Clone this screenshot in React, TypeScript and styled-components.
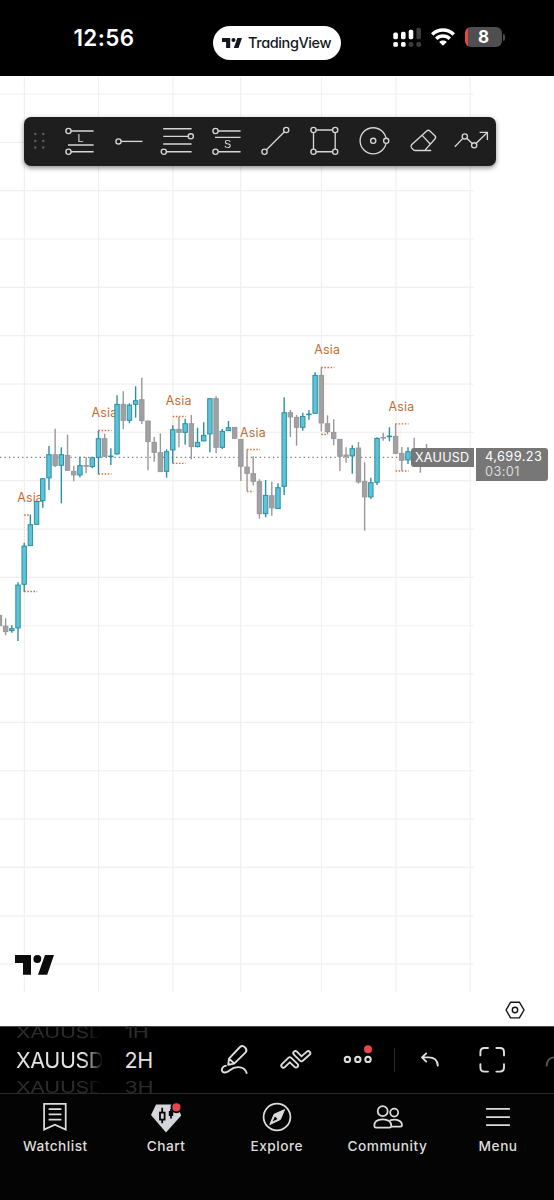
import React from "react";
import styled, { createGlobalStyle } from "styled-components";

const GlobalStyle = createGlobalStyle`
  *, *::before, *::after { box-sizing: border-box; }
  body { margin: 0; background: #000; font-family: Inter, "Liberation Sans", sans-serif; }
  svg { display: block; overflow: visible; flex: none; }
`;

const Screen = styled.div`
  width: 554px;
  height: 1200px;
  display: flex;
  flex-direction: column;
  overflow: hidden;
  background: #000;
`;

/* ---------- status bar ---------- */

const StatusBar = styled.header`
  height: 76px;
  flex: none;
  display: grid;
  grid-template-columns: 213px 127.5px 1fr;
  background: #000;
`;

const Clock = styled.div`
  padding: 25px 0 0 73.5px;
  color: #fff;
  font-size: 22.4px;
  line-height: 26px;
  font-weight: 600;
  letter-spacing: 0.4px;
`;

const BrandPill = styled.div`
  margin-top: 26px;
  height: 33.5px;
  border-radius: 17px;
  background: #fff;
  color: #131722;
  display: flex;
  align-items: center;
  padding-left: 9px;
  gap: 6px;
`;

const BrandName = styled.span`
  font-size: 14.5px;
  font-weight: 500;
  letter-spacing: -0.4px;
  font-feature-settings: "cv11";
  white-space: nowrap;
`;

const StatusIcons = styled.div`
  display: flex;
  align-items: flex-start;
  padding: 27px 0 0 52.5px;
`;

const WifiSlot = styled.div`
  margin: 1px 10px 0 10px;
`;

const Battery = styled.div`
  width: 37px;
  height: 20px;
  border-radius: 6px;
  background: linear-gradient(90deg, #e8453c 3.4px, #4f4f51 3.4px);
  color: #fff;
  font-size: 17px;
  line-height: 20.5px;
  font-weight: 700;
  text-align: center;
`;

const BatteryTip = styled.div`
  width: 2px;
  height: 7px;
  margin: 6.5px 0 0 1px;
  border-radius: 0 2px 2px 0;
  background: #4f4f51;
`;

/* ---------- chart ---------- */

const ChartPane = styled.main`
  position: relative;
  height: 950px;
  flex: none;
  background: #fff;
`;

const DrawingBar = styled.div`
  position: absolute;
  left: 24px;
  top: 41px;
  width: 471.5px;
  height: 48.5px;
  padding-left: 10px;
  display: flex;
  align-items: center;
  border-radius: 7px;
  background: #1e1e1e;
  box-shadow: 0 2px 5px rgba(0, 0, 0, 0.45);
  will-change: transform;
`;

const Grip = styled.div`
  width: 21px;
  flex: none;
`;

const DrawingTool = styled.button`
  width: 49px;
  flex: none;
  height: 48px;
  padding: 0;
  border: 0;
  background: none;
  display: flex;
  align-items: center;
  justify-content: center;
`;

const SymbolTag = styled.div`
  position: absolute;
  left: 410.5px;
  top: 372px;
  width: 63.5px;
  height: 19px;
  padding-left: 4.5px;
  border-radius: 3px 0 0 3px;
  background: #777;
  color: #fff;
  font-size: 12.6px;
  line-height: 19px;
  letter-spacing: 0.25px;
`;

const PriceTag = styled.div`
  position: absolute;
  left: 475.5px;
  top: 372px;
  width: 72.5px;
  height: 33px;
  padding: 2px 0 0 9.5px;
  border-radius: 0 3px 3px 0;
  background: #777;
  color: #fff;
  font-size: 12.8px;
  line-height: 14.6px;
  letter-spacing: 0.4px;
`;

const Countdown = styled.div`
  color: #dadada;
`;

const WatermarkLogo = styled.div`
  position: absolute;
  left: 15px;
  top: 879px;
`;

const SettingsButton = styled.button`
  position: absolute;
  left: 504.7px;
  top: 924px;
  padding: 0;
  border: 0;
  background: none;
`;

/* ---------- bottom bars ---------- */

const ChartToolbar = styled.div`
  height: 67px;
  flex: none;
  display: flex;
  padding-left: 16px;
  background: #000;
  border-top: 1px solid #4a4a4a;
`;

const Wheel = styled.div<{ $width: number; $fade?: boolean }>`
  width: ${(p) => p.$width}px;
  flex: none;
  height: 66px;
  display: flex;
  flex-direction: column;
  align-items: flex-start;
  white-space: nowrap;
  letter-spacing: -0.4px;
  ${(p) => p.$fade && "mask-image: linear-gradient(90deg, #000 68px, transparent 87px);"}
`;

const WheelGhost = styled.div`
  height: 12px;
  color: #2c2c2c;
  font-size: 21.5px;
  line-height: 12px;
  transform: translateY(-0.8px) scaleY(0.72);
`;

const WheelValue = styled.div`
  height: 42.5px;
  color: #e2e2e2;
  font-size: 21.5px;
  line-height: 43px;
`;

const ToolCell = styled.button`
  width: 61.5px;
  height: 66px;
  flex: none;
  padding: 0;
  border: 0;
  background: none;
  display: flex;
  align-items: center;
  justify-content: center;
`;

const Separator = styled.div`
  width: 1px;
  height: 24px;
  margin: 21px 5px 0 5px;
  flex: none;
  background: #2b2b2b;
`;

const NavBar = styled.nav`
  height: 107px;
  flex: none;
  display: grid;
  grid-template-columns: repeat(5, 110.7px);
  background: #040404;
  border-top: 1px solid #2a2a2a;
`;

const NavItem = styled.a`
  display: flex;
  flex-direction: column;
  align-items: center;
  padding-top: 6.5px;
  color: #dcdcdc;
`;

const NavLabel = styled.span`
  margin-top: 4.5px;
  font-size: 13.7px;
  line-height: 18px;
  font-weight: 500;
  letter-spacing: 0.5px;
`;

/* ---------- chart data ---------- */

const BAR_STEP = 6.19;
const FIRST_BAR = -4;
const barX = (i: number) => 24.2 + i * BAR_STEP;

type Candle = ["u" | "d", number, number, number, number];

// direction, high, body top, body bottom, low
const candles: Candle[] = [
  ["d", 615, 615, 626, 626],
  ["d", 618.3, 625.7, 632, 635.3],
  ["u", 625.3, 628.3, 631, 632.7],
  ["u", 582.3, 584.7, 628.3, 641],
  ["u", 542.7, 545.7, 584.7, 591.7],
  ["u", 514.7, 524.3, 546, 546],
  ["u", 501, 501, 524.7, 524.7],
  ["u", 478.3, 478.3, 501, 507.7],
  ["u", 446, 454.3, 478.3, 490],
  ["d", 428.7, 454.3, 466, 467],
  ["u", 447.3, 454.3, 465.7, 503.3],
  ["d", 434.7, 455, 470.7, 470.7],
  ["d", 465.7, 471, 475.3, 481.3],
  ["u", 456.7, 465.3, 475.3, 477.3],
  ["d", 457, 465.3, 466.7, 473.3],
  ["u", 456.7, 457.3, 467, 468.3],
  ["u", 430.7, 438.3, 457.7, 474.3],
  ["d", 433.7, 438.3, 456.7, 456.7],
  ["u", 448.3, 455.7, 457, 465],
  ["u", 395.3, 404, 454.3, 454.7],
  ["d", 391.3, 404, 420.7, 429.3],
  ["u", 403.3, 404.7, 420.7, 423.3],
  ["u", 386.3, 400.3, 404.7, 417.7],
  ["d", 377.7, 399.3, 421, 424],
  ["d", 420.7, 420.7, 442, 470.3],
  ["d", 437, 442, 452.7, 461.7],
  ["d", 433.3, 452.3, 472, 472],
  ["u", 449.3, 451.3, 471.7, 477.7],
  ["u", 425.3, 429.3, 450.3, 463.3],
  ["d", 416.7, 429, 432.7, 447.3],
  ["u", 418.7, 423.3, 432.7, 444.7],
  ["d", 415, 423.3, 447, 459.3],
  ["u", 427.7, 442, 447, 447.4],
  ["u", 422.3, 435, 441.3, 441.3],
  ["u", 398.3, 398.3, 434.3, 452.3],
  ["d", 396.3, 398.3, 447.7, 453],
  ["u", 429, 431, 447.7, 449],
  ["u", 421, 427.3, 431, 431],
  ["d", 427, 427, 438.7, 438.7],
  ["d", 439, 439, 466.7, 481],
  ["d", 449.3, 466.7, 473.7, 491.3],
  ["d", 456.3, 473.3, 481.7, 485.3],
  ["d", 479.3, 481.3, 514, 518.7],
  ["u", 480, 495, 514, 517.3],
  ["d", 481.7, 495.3, 508.2, 515.7],
  ["u", 483.3, 487.3, 509, 509],
  ["u", 397.3, 412.3, 486.7, 495],
  ["d", 410, 412.3, 417.3, 437],
  ["d", 415, 417, 427.7, 445.7],
  ["u", 412.7, 416, 427.7, 430.7],
  ["u", 410, 413.7, 415, 419.7],
  ["u", 372.3, 375, 413.7, 413.7],
  ["d", 367.3, 375, 423.3, 431.3],
  ["d", 415.3, 423.3, 432, 434],
  ["d", 419.3, 432, 439, 445.3],
  ["d", 439, 439, 456.7, 471],
  ["d", 447.3, 454.7, 456.7, 462.7],
  ["u", 445.3, 448.3, 456.3, 473.7],
  ["d", 442, 447.7, 482.3, 483.7],
  ["d", 462.3, 481, 497.3, 530.7],
  ["u", 477.7, 482.3, 497.3, 499],
  ["u", 437.3, 438, 482.7, 485],
  ["d", 432.7, 437, 438.3, 440.7],
  ["u", 427.3, 435.7, 437, 441.3],
  ["d", 423.7, 436, 453.7, 453.7],
  ["d", 447, 453, 460.7, 470.7],
  ["u", 447.3, 451.3, 460.3, 464],
  ["d", 437.7, 452, 458, 460],
  ["d", 450, 452, 460, 472.7],
  ["d", 444, 452, 460, 460],
];

interface Session {
  bar: number;
  top: number;
  bottom: number;
  topWidth: number;
  bottomWidth: number;
  label: number;
}

const sessions: Session[] = [
  { bar: 0, top: 515, bottom: 591.5, topWidth: 6.5, bottomWidth: 13, label: 502.3 },
  { bar: 12, top: 430.5, bottom: 474, topWidth: 13, bottomWidth: 13, label: 417.3 },
  { bar: 24, top: 416.5, bottom: 463.3, topWidth: 13, bottomWidth: 13, label: 404.6 },
  { bar: 36, top: 449.5, bottom: 491.5, topWidth: 13, bottomWidth: 6.5, label: 437 },
  { bar: 48, top: 367.5, bottom: 434.5, topWidth: 13, bottomWidth: 6.5, label: 354.4 },
  { bar: 60, top: 423.8, bottom: 471, topWidth: 13, bottomWidth: 13, label: 411.2 },
];

const gridX = [24.4, 98.5, 173, 240.6, 321.5, 396, 470.2];
const gridY = Array.from({ length: 19 }, (_, i) => 94 + i * 48.34);

function CandleChart() {
  return (
    <svg width="554" height="950" viewBox="0 76 554 950">
      <g stroke="#f0f0f1" strokeWidth="1.2">
        {gridX.map((x) => (
          <line key={x} x1={x} x2={x} y1="77" y2="992" />
        ))}
        {gridY.map((y) => (
          <line key={y} x1="0" x2="473.5" y1={y} y2={y} />
        ))}
      </g>
      <line x1="0" x2="411" y1="457.4" y2="457.4" stroke="#808080" strokeWidth="1.2" strokeDasharray="1.4 3" />
      {sessions.map((s) => {
        const x = barX(s.bar);
        return (
          <g key={s.bar}>
            <rect x={x} y={s.top} width="6.2" height={s.bottom - s.top} fill="#f08a3c" opacity="0.05" />
            <line x1={x} x2={x} y1={s.top} y2={s.bottom} stroke="#e9a77c" strokeWidth="0.7" strokeDasharray="1 2" opacity="0.5" />
            <g stroke="#cf7136" strokeWidth="1.3" strokeDasharray="1.5 1.6">
              <line x1={x} x2={x + s.topWidth} y1={s.top} y2={s.top} />
              <line x1={x} x2={x + s.bottomWidth} y1={s.bottom} y2={s.bottom} />
            </g>
            <text x={x + 5.9} y={s.label} textAnchor="middle" fontSize="12.4" letterSpacing="0.2" fill="#c96c30">
              Asia
            </text>
          </g>
        );
      })}
      {candles.map(([dir, high, top, bottom, low], n) => {
        const x = barX(n + FIRST_BAR);
        const up = dir === "u";
        const line = up ? "#2b8fa2" : "#98989b";
        return (
          <g key={n}>
            <line x1={x} x2={x} y1={high} y2={low} stroke={line} strokeWidth="1.4" />
            <rect
              x={x - 2.2}
              y={top + 0.4}
              width="4.4"
              height={Math.max(bottom - top - 0.8, 0.6)}
              fill={up ? "#5cc3d8" : "#a1a1a4"}
              stroke={line}
              strokeWidth="1"
            />
          </g>
        );
      })}
    </svg>
  );
}

/* ---------- icons ---------- */

function TvLogo({ width, halo }: { width: number; halo?: boolean }) {
  return (
    <svg width={width} height={width * 0.51} viewBox="0 0 39 19.8" fill={halo ? "#0c0c0c" : "#131722"}>
      <g stroke={halo ? "#fff" : "none"} strokeWidth="4" paintOrder="stroke">
        <path d="M0 0H16V19.7H8V8H0Z" />
        <circle cx="22.4" cy="4" r="4" />
        <path d="M30 0H39L32.2 19.7H23Z" />
      </g>
    </svg>
  );
}

function DrawIcon({ children }: { children: React.ReactNode }) {
  return (
    <svg width="32" height="32" viewBox="0 0 32 32" fill="none" stroke="#d6d6d6" strokeWidth="1.35">
      {children}
    </svg>
  );
}

const Knob = ({ x, y }: { x: number; y: number }) => <circle cx={x} cy={y} r="2.6" fill="#1e1e1e" />;

function IconLetter({ x, y, children }: { x: number; y: number; children: string }) {
  return (
    <text x={x} y={y} textAnchor="middle" fontSize="10.8" fill="#dedede" stroke="none">
      {children}
    </text>
  );
}

const drawingIcons: React.ReactNode[] = [
  <>
    <path d="M4.5 6H29.6M4 20H29.6M4.5 26.7H29.6" />
    <Knob x={4.5} y={6} />
    <Knob x={4.5} y={26.7} />
    <IconLetter x={16.6} y={17.2}>L</IconLetter>
  </>,
  <>
    <path d="M5.5 16.4H29.5" />
    <Knob x={5.5} y={16.4} />
  </>,
  <>
    <path d="M1.2 3.7H29.6M1.2 11.3H28.8M1.2 19H29.6M1.8 26.7H29.6" />
    <Knob x={28.8} y={11.3} />
    <Knob x={1.8} y={26.7} />
  </>,
  <>
    <path d="M4.5 6H29.6M4 12.4H29.6M4.5 26.7H29.6" />
    <Knob x={4.5} y={6} />
    <Knob x={4.5} y={26.7} />
    <IconLetter x={16.6} y={23.4}>S</IconLetter>
  </>,
  <>
    <path d="M4.5 26.7L26.2 5" />
    <Knob x={4.5} y={26.7} />
    <Knob x={26.2} y={5} />
  </>,
  <>
    <path d="M4.5 5H26.2V26.7H4.5Z" />
    <Knob x={4.5} y={5} />
    <Knob x={26.2} y={5} />
    <Knob x={4.5} y={26.7} />
    <Knob x={26.2} y={26.7} />
  </>,
  <>
    <circle cx="15.2" cy="15.8" r="13.1" />
    <Knob x={15.2} y={15.8} />
    <Knob x={28.2} y={15.8} />
  </>,
  <path d="M17.8 25.4L27.9 14Q29.4 12.3 27.9 10.7L22.9 5.9Q21.3 4.6 19.7 6.1L4.6 19.7Q3.2 21.3 4.6 22.9L6.4 24.7Q7.2 25.5 8.3 25.5H24.2M15.2 10.4L23.2 19" />,
  <>
    <path d="M-1.2 21.8L8.8 11.4L18.2 20.3L31 7.8M23.6 7.4H31.4V15" />
    <Knob x={8.8} y={11.4} />
    <Knob x={18.2} y={20.3} />
  </>,
];

function ToolIcon({ children, color = "#dedede" }: { children: React.ReactNode; color?: string }) {
  return (
    <svg width="32" height="32" viewBox="0 0 32 32" fill="none" stroke={color} strokeWidth="1.9" strokeLinecap="round" strokeLinejoin="round">
      {children}
    </svg>
  );
}

function NavIcon({ children }: { children: React.ReactNode }) {
  return (
    <svg width="32" height="32" viewBox="0 0 32 32" fill="none" stroke="#dcdcdc" strokeWidth="1.75">
      {children}
    </svg>
  );
}

const navItems: { label: string; icon: React.ReactNode }[] = [
  {
    label: "Watchlist",
    icon: <path d="M5.1 2.9H26.7V28.6L15.9 23.8L5.1 28.6ZM9.6 8H22.4M9.6 13.3H22.4M9.6 18.6H22.4" />,
  },
  {
    label: "Chart",
    icon: (
      <>
        <path d="M6 3.6H26.5L31.2 14.4L16 31.6L1 14Z" fill="#d5d6dc" stroke="none" />
        <path d="M12.2 6.8V11.4M12.2 18.6V22.2" stroke="#050505" />
        <rect x="10" y="11.6" width="4.6" height="7" stroke="#050505" strokeWidth="1.8" />
        <path d="M21 8V17.6" stroke="#050505" />
        <rect x="18.8" y="10" width="4.4" height="5" fill="#050505" stroke="none" />
        <circle cx="26.4" cy="6.3" r="5" fill="#e8474d" stroke="#050505" strokeWidth="1.8" />
      </>
    ),
  },
  {
    label: "Explore",
    icon: (
      <>
        <circle cx="16" cy="16" r="13.4" />
        <path d="M23.6 8.6L19.4 18.5L8.8 23.6L13 13.3Z" fill="#dcdcdc" strokeWidth="1" strokeLinejoin="round" />
        <path d="M13.9 15.6L16.6 18.1L11.6 20.6Z" fill="#040404" stroke="none" />
      </>
    ),
  },
  {
    label: "Community",
    icon: (
      <>
        <circle cx="11.7" cy="10.2" r="5" />
        <circle cx="23.2" cy="11.6" r="4" />
        <path d="M3.3 25.2C3.1 20.6 6.2 18.3 11.7 18.3C17.2 18.3 20.4 20.6 20.3 25.2Q20.1 26.7 18.6 26.7H5Q3.5 26.7 3.3 25.2Z" />
        <path d="M18.8 19.4C25.6 17.6 31 19.6 31 24.4Q30.9 25.7 29.4 25.7H20.4" />
      </>
    ),
  },
  { label: "Menu", icon: <path d="M4.1 7.8H27.9M4.1 16H27.9M4.1 24.1H27.9" /> },
];

export default function App() {
  return (
    <Screen>
      <GlobalStyle />
      <StatusBar>
        <Clock>12:56</Clock>
        <BrandPill>
          <TvLogo width={20} />
          <BrandName>TradingView</BrandName>
        </BrandPill>
        <StatusIcons>
          <svg width="28" height="20" viewBox="0 0 28 20" fill="#fff">
            <rect x="0.3" y="5.6" width="4.6" height="6.6" rx="1.6" />
            <rect x="8" y="4.8" width="4.6" height="7.4" rx="1.6" />
            <rect x="15.7" y="2.8" width="4.6" height="9.4" rx="1.6" />
            <rect x="23.4" y="0.8" width="4.6" height="11.4" rx="1.6" fill="#3d3d3f" />
            <rect x="0.3" y="15" width="4.6" height="4.8" rx="1.6" />
            <rect x="8" y="15" width="4.6" height="4.8" rx="1.6" />
            <rect x="15.7" y="15" width="4.6" height="4.8" rx="1.6" fill="#3d3d3f" />
            <rect x="23.4" y="15" width="4.6" height="4.8" rx="1.6" fill="#3d3d3f" />
          </svg>
          <WifiSlot>
            <svg width="24" height="18" viewBox="0 0 24 18" fill="none" stroke="#fff" strokeWidth="3.4">
              <path d="M1.2 6.5C7.2 0.5 16.8 0.5 22.8 6.5" />
              <path d="M5.2 10.8C9 7.1 15 7.1 18.8 10.8" />
              <path d="M12 17.8L8.2 14C10.3 12.1 13.7 12.1 15.8 14Z" fill="#fff" stroke="none" />
            </svg>
          </WifiSlot>
          <Battery>8</Battery>
          <BatteryTip />
        </StatusIcons>
      </StatusBar>

      <ChartPane>
        <CandleChart />
        <SymbolTag>XAUUSD</SymbolTag>
        <PriceTag>
          4,699.23
          <Countdown>03:01</Countdown>
        </PriceTag>
        <WatermarkLogo>
          <TvLogo width={39} halo />
        </WatermarkLogo>
        <SettingsButton>
          <svg width="20" height="20" viewBox="0 0 20 20" fill="none" stroke="#151515" strokeWidth="1.4">
            <path d="M5.6 2.2H14.4L19 10L14.4 17.9H5.6L1.1 10Z" />
            <circle cx="10" cy="10" r="2.7" />
          </svg>
        </SettingsButton>
        <DrawingBar>
          <Grip>
            <svg width="12" height="18" viewBox="0 0 12 18" fill="#5c5c5c">
              {[2, 9, 15.5].map((y) => (
                <g key={y}>
                  <circle cx="1.3" cy={y} r="1.3" />
                  <circle cx="9.2" cy={y} r="1.3" />
                </g>
              ))}
            </svg>
          </Grip>
          {drawingIcons.map((icon, i) => (
            <DrawingTool key={i}>
              <DrawIcon>{icon}</DrawIcon>
            </DrawingTool>
          ))}
        </DrawingBar>
      </ChartPane>

      <ChartToolbar>
        <Wheel $width={108.5} $fade>
          <WheelGhost>XAUUSD</WheelGhost>
          <WheelValue>XAUUSD</WheelValue>
          <WheelGhost>XAUUSD</WheelGhost>
        </Wheel>
        <Wheel $width={79.5}>
          <WheelGhost>1H</WheelGhost>
          <WheelValue>2H</WheelValue>
          <WheelGhost>3H</WheelGhost>
        </Wheel>
        <ToolCell>
          <ToolIcon>
            <path d="M9.2 20.8L10 14.6L21 3Q23.4 1 26 3.4Q28.6 6 26.6 8.4L15.2 19.6ZM10.2 14.8L15 19.4" />
            <path d="M6.8 21.8C3.4 22.4 2.2 25 3.2 27.2C4.2 29.4 7.6 28.8 10.8 26.2C17.4 21.2 26 22.6 27.6 29" />
          </ToolIcon>
        </ToolCell>
        <ToolCell>
          <ToolIcon>
            <path d="M3.4 21.6L9.8 15.3L16 21.4" strokeWidth="6" />
            <path d="M3.4 21.6L9.8 15.3L16 21.4" strokeWidth="2.4" stroke="#000" />
            <path d="M15.4 9.2L21.4 15.2L28.2 9.2" strokeWidth="6" />
            <path d="M15.4 9.2L21.4 15.2L28.2 9.2" strokeWidth="2.4" stroke="#000" />
          </ToolIcon>
        </ToolCell>
        <ToolCell>
          <ToolIcon>
            <g strokeWidth="2">
              <circle cx="5.4" cy="15.4" r="2.7" />
              <circle cx="15.8" cy="15.4" r="2.7" />
              <circle cx="26" cy="15.4" r="2.7" />
            </g>
            <circle cx="26" cy="5.2" r="4" fill="#e8474d" stroke="none" />
          </ToolIcon>
        </ToolCell>
        <Separator />
        <ToolCell>
          <ToolIcon>
            <path d="M23.8 21.6C23.4 16 20 13.4 14.6 13.4H8.2M12.2 9.4L8 13.4L12.2 17.6" />
          </ToolIcon>
        </ToolCell>
        <ToolCell>
          <ToolIcon>
            <path d="M4.4 11.4V8Q4.4 4 8.4 4H12M20.4 4H24Q28 4 28 8V11.4M28 20.2V23.6Q28 27.6 24 27.6H20.4M12 27.6H8.4Q4.4 27.6 4.4 23.6V20.2" />
          </ToolIcon>
        </ToolCell>
        <ToolCell>
          <ToolIcon color="#555">
            <path d="M9.6 21.6C10 16 13 13.6 17 13.4" />
          </ToolIcon>
        </ToolCell>
      </ChartToolbar>

      <NavBar>
        {navItems.map((item) => (
          <NavItem key={item.label}>
            <NavIcon>{item.icon}</NavIcon>
            <NavLabel>{item.label}</NavLabel>
          </NavItem>
        ))}
      </NavBar>
    </Screen>
  );
}
